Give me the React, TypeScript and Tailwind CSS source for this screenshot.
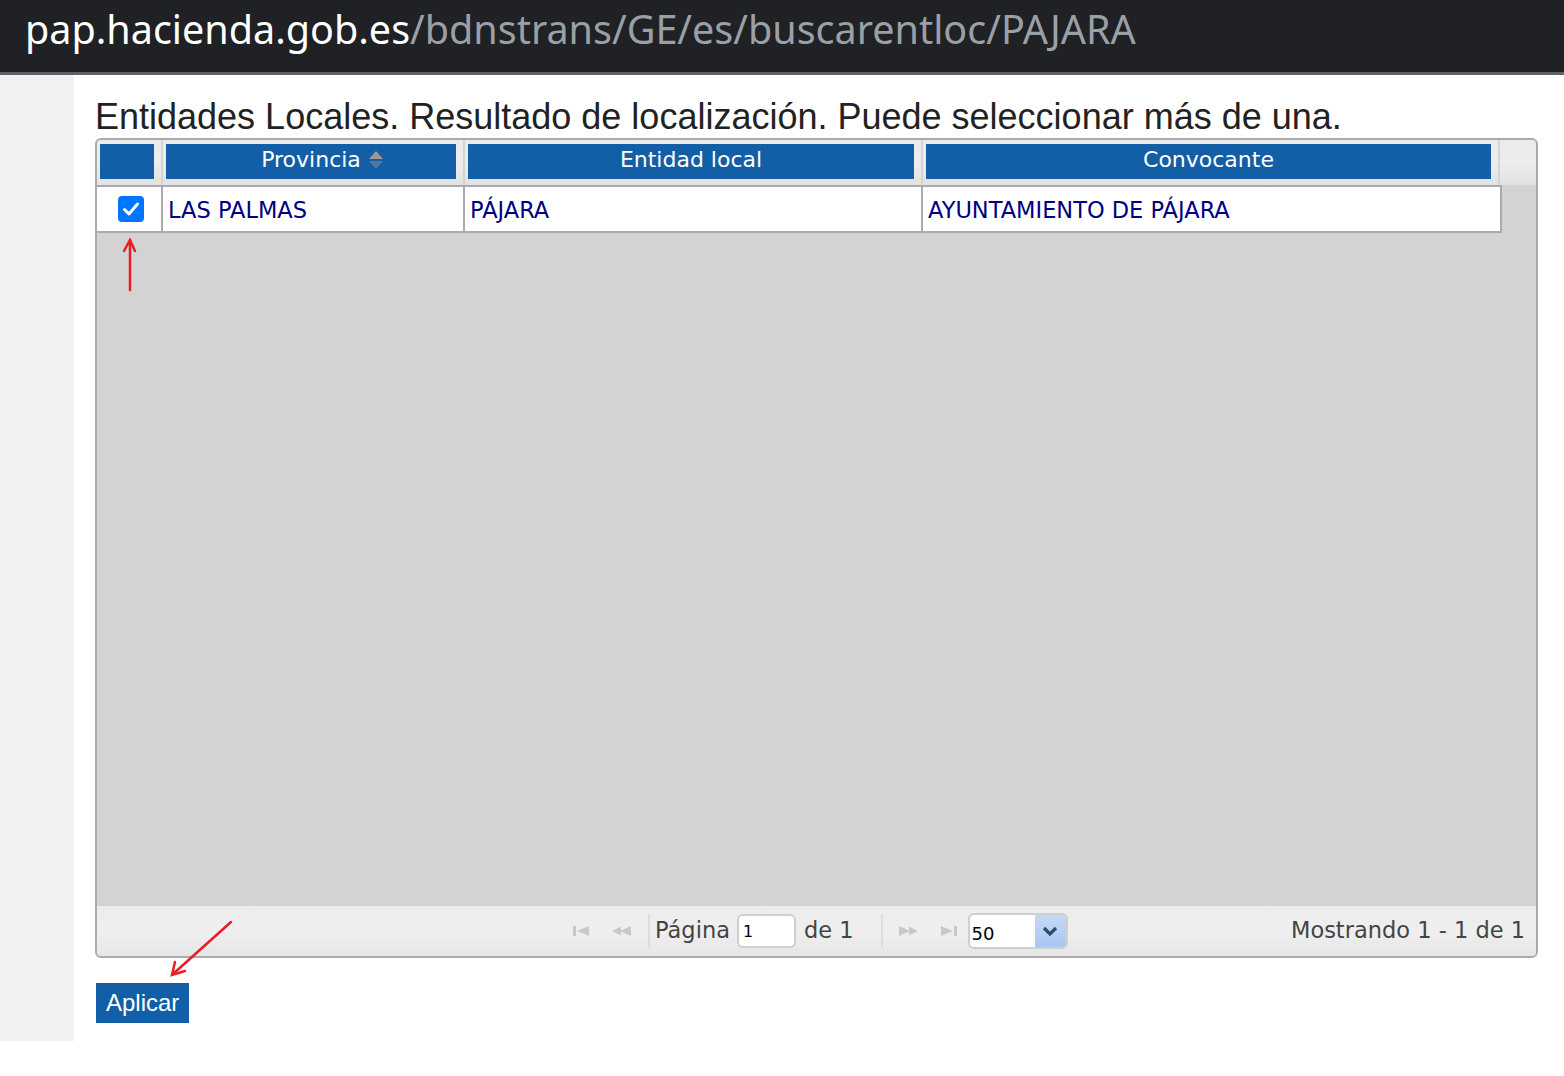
import React from 'react';

const verdana = { fontFamily: '"DejaVu Sans", Verdana, sans-serif' };

function PagerIcon({ kind }: { kind: 'first' | 'prev' | 'next' | 'last' }) {
  const c = '#c8c8c8';
  return (
    <svg width="21" height="14" viewBox="0 0 21 14">
      {kind === 'first' && (
        <g fill={c}>
          <rect x="1" y="2" width="3" height="10" />
          <polygon points="5,7 17,2 17,12" />
        </g>
      )}
      {kind === 'prev' && (
        <g fill={c}>
          <polygon points="1,7 10,2.5 10,11.5" />
          <polygon points="9,7 20,2 20,12" />
        </g>
      )}
      {kind === 'next' && (
        <g fill={c}>
          <polygon points="1,2 12,7 1,12" />
          <polygon points="11,2.5 20,7 11,11.5" />
        </g>
      )}
      {kind === 'last' && (
        <g fill={c}>
          <polygon points="3,2 15,7 3,12" />
          <rect x="16" y="2" width="3" height="10" />
        </g>
      )}
    </svg>
  );
}

function HeaderCell({ w, children }: { w: string; children?: React.ReactNode }) {
  return (
    <div className={`${w} h-full flex items-center pl-[3px] pr-[7px] pb-[3px] border-r-2 border-[#d4d4d4]`}>
      <div className="h-[35px] w-full bg-[#125fa7] flex items-center justify-center text-white text-[22px] pb-[4px]">
        {children}
      </div>
    </div>
  );
}

export default function App() {
  return (
    <div className="w-[1564px] min-h-[1076px] bg-white" style={{ fontFamily: '"Liberation Sans", Arial, sans-serif' }}>
      {/* address bar */}
      <div className="h-[75px] bg-[#202124] border-b-[3px] border-[#5f6061] flex items-center pl-[25px]">
        <div className="text-[39.5px] leading-none -mt-[12px]" style={{ fontFamily: '"Noto Sans", "Open Sans", sans-serif' }}>
          <span className="text-white">pap.hacienda.gob.es</span>
          <span className="text-[#9aa0a6]">/bdnstrans/GE/es/buscarentloc/PAJARA</span>
        </div>
      </div>

      <div className="flex">
        <div className="w-[74px] bg-[#f1f1f1]" />
        <div className="relative flex-1 pl-[21px] pt-[22px] pb-[18px]">
          <h1 className="text-[36px] leading-[40px] text-[#222] mb-[1px]">
            Entidades Locales. Resultado de localización. Puede seleccionar más de una.
          </h1>

          {/* grid */}
          <div className="w-[1443px] h-[820px] border-2 border-[#ababab] rounded-[6px] overflow-hidden flex flex-col bg-[#d3d3d3]" style={verdana}>
            <div className="h-[45px] flex bg-gradient-to-b from-[#ebebeb] via-[#ededed] to-[#e2e2e2]">
              <HeaderCell w="w-[66px]" />
              <HeaderCell w="w-[302px]">
                <span className="relative">
                  Provincia
                  <svg width="18" height="24" viewBox="0 0 18 24" className="absolute left-full top-[5px] ml-[6px]">
                    <polygon points="9,3 16,11 2,11" fill="#9a9a9a" />
                    <polygon points="2,13 16,13 9,21" fill="#5578a0" />
                  </svg>
                </span>
              </HeaderCell>
              <HeaderCell w="w-[458px]">Entidad local</HeaderCell>
              <HeaderCell w="w-[577px]">Convocante</HeaderCell>
              <div className="flex-1" />
            </div>

            <div className="flex-1 relative">
              <div className="w-[1405px] h-[48px] flex bg-white border-t-2 border-b-2 border-r-2 border-[#ababab] text-[#000080] text-[22.5px]">
                <div className="w-[66px] border-r-2 border-[#ababab] flex items-center justify-center pl-[3px]">
                  <div className="w-[26px] h-[26px] rounded-[4px] bg-[#0075ff] flex items-center justify-center">
                    <svg width="18" height="16" viewBox="0 0 18 16">
                      <path d="M2.5 8.5 L7 13 L15.5 3" stroke="white" strokeWidth="3" fill="none" strokeLinecap="round" strokeLinejoin="round" />
                    </svg>
                  </div>
                </div>
                <div className="w-[302px] border-r-2 border-[#ababab] flex items-center pl-[5px] pt-[3px]">LAS PALMAS</div>
                <div className="w-[458px] border-r-2 border-[#ababab] flex items-center pl-[5px] pt-[3px]">PÁJARA</div>
                <div className="flex-1 flex items-center pl-[5px] pt-[3px]">AYUNTAMIENTO DE PÁJARA</div>
              </div>
            </div>

            {/* pager */}
            <div className="h-[50px] flex items-center bg-gradient-to-b from-[#ececec] via-[#efefef] to-[#e6e6e6] text-[22.5px] text-[#444]">
              <div className="flex-1 flex items-center pl-[475px]">
                <div className="flex items-center gap-[18px]">
                  <PagerIcon kind="first" />
                  <PagerIcon kind="prev" />
                </div>
                <div className="w-[2px] h-[34px] bg-[#dcdcdc] ml-[16px] mr-[5px]" />
                <span>Página</span>
                <div className="ml-[7px] w-[59px] h-[34px] bg-white border-2 border-[#cfcfcf] rounded-[6px] text-[16px] text-black flex items-end pl-[4px] pb-[2px]">1</div>
                <span className="ml-[8px]">de 1</span>
                <div className="w-[2px] h-[34px] bg-[#dcdcdc] ml-[27px] mr-[15px]" />
                <div className="flex items-center gap-[19px]">
                  <PagerIcon kind="next" />
                  <PagerIcon kind="last" />
                </div>
                <div className="ml-[9px] w-[100px] h-[36px] bg-white border-2 border-[#cfcfcf] rounded-[6px] flex overflow-hidden">
                  <div className="flex-1 text-[18px] text-black flex items-end pl-[2px]">50</div>
                  <div className="w-[31px] bg-gradient-to-b from-[#c5d9f7] to-[#a9c6f2] flex items-center justify-center">
                    <svg width="16" height="12" viewBox="0 0 16 12">
                      <path d="M2 3 L8 9 L14 3" stroke="#2d4a6b" strokeWidth="3.2" fill="none" />
                    </svg>
                  </div>
                </div>
              </div>
              <div className="w-[330px] text-right pr-[11px]">Mostrando 1 - 1 de 1</div>
            </div>
          </div>

          <button className="mt-[25px] ml-[1px] h-[40px] px-[10px] bg-[#125fa7] text-white text-[24px] leading-none">Aplicar</button>

          {/* red annotation arrows */}
          <svg className="absolute left-0 top-0 pointer-events-none" width="300" height="1000">
            <g stroke="#ec1c24" strokeWidth="2.5" fill="none" strokeLinecap="round">
              <line x1="56" y1="215" x2="56" y2="166" />
              <polyline points="50,176 56,165 61,176" />
              <line x1="157" y1="847" x2="99" y2="899" />
              <polyline points="101,887 98,900 111,896" />
            </g>
          </svg>
        </div>
      </div>
    </div>
  );
}
